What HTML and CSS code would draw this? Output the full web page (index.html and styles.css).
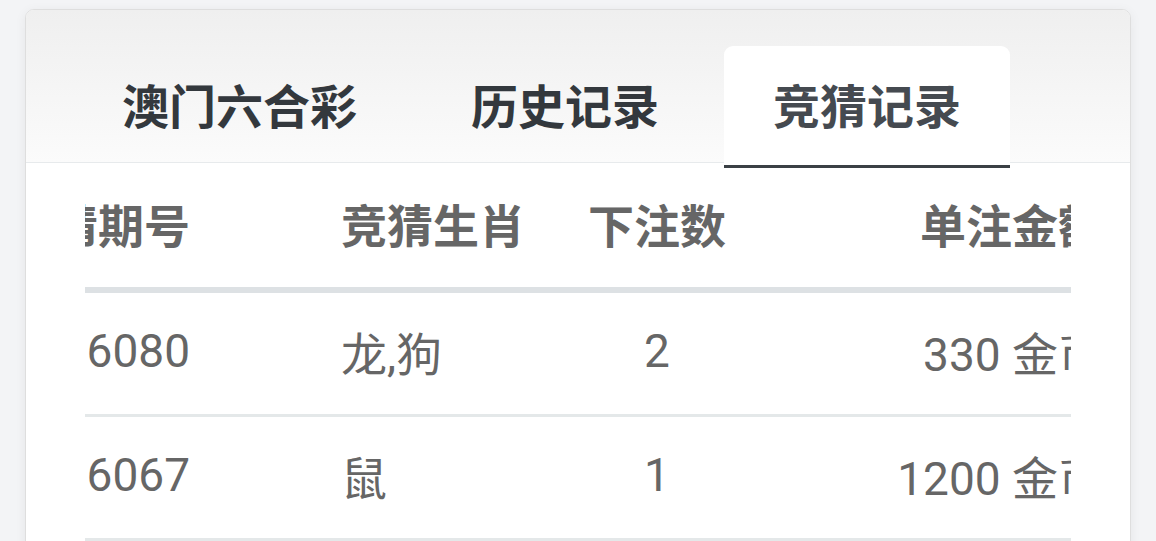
FILE: index.html
```html
<!DOCTYPE html>
<html lang="zh-CN">
<head>
<meta charset="utf-8">
<title>竞猜记录</title>
<link rel="stylesheet" href="styles.css">
</head>
<body>
<div class="card">
  <div class="card-head">
    <div class="tabs">
      <div class="tab">澳门六合彩</div>
      <div class="tab">历史记录</div>
      <div class="tab active">竞猜记录</div>
    </div>
  </div>
  <div class="card-body">
    <div class="scroller">
      <div class="table">
        <div class="tr thead">
          <div class="cell c1">竞猜期号</div>
          <div class="cell c2">竞猜生肖</div>
          <div class="cell c3">下注数</div>
          <div class="cell c4">单注金额</div>
        </div>
        <div class="tr">
          <div class="cell c1">6080</div>
          <div class="cell c2">龙,狗</div>
          <div class="cell c3">2</div>
          <div class="cell c4">330 金币</div>
        </div>
        <div class="tr">
          <div class="cell c1">6067</div>
          <div class="cell c2">鼠</div>
          <div class="cell c3">1</div>
          <div class="cell c4">1200 金币</div>
        </div>
      </div>
    </div>
  </div>
</div>
</body>
</html>
```

FILE: styles.css
```css
html, body {
  margin: 0;
  height: 100%;
  overflow: hidden;
}
body {
  background: #f3f4f6;
  padding: 9px 25px 0;
  font-family: Roboto, "Noto Sans CJK SC", sans-serif;
}
.card {
  background: #ffffff;
  border: 1px solid #dedede;
  border-radius: 9px;
  box-shadow: 0 2px 12px rgba(0, 0, 0, 0.06);
  height: 700px;
  overflow: hidden;
}
.card-head {
  background: linear-gradient(to bottom, #efefef, #fbfbfb);
  border-bottom: 1px solid #e7eaec;
  padding: 36px 0 0 47px;
}
.tabs {
  display: flex;
  gap: 16px;
  margin-bottom: -6px;
}
.tab {
  position: relative;
  z-index: 1;
  box-sizing: border-box;
  height: 122px;
  padding: 0 49px 5px;
  display: flex;
  align-items: center;
  font-family: "Noto Sans CJK SC", sans-serif;
  font-weight: 700;
  font-size: 47px;
  line-height: 1;
  color: #33383d;
  border-bottom: 3px solid transparent;
}
.tab.active {
  background: #ffffff;
  border-radius: 9px 9px 0 0;
  color: #454a50;
  border-bottom-color: #3b4045;
}
.card-body {
  padding: 0 59px;
}
.scroller {
  overflow: hidden;
}
.table {
  margin-left: -85px;
  width: 1141px;
}
.tr {
  display: grid;
  grid-template-columns: 228px 332px 194px 387px;
  height: 121px;
  border-bottom: 3px solid #e4e8e9;
  font-size: 46px;
  color: #666666;
}
.tr.thead {
  height: 124px;
  border-bottom: 6px solid #dde1e4;
  font-family: "Noto Sans CJK SC", sans-serif;
  font-weight: 700;
  font-size: 46px;
}
.cell {
  display: flex;
  align-items: center;
  white-space: nowrap;
  padding-bottom: 5px;
}
.c1 {
  justify-content: flex-end;
  padding-right: 38px;
}
.c2 {
  padding-left: 113px;
}
.c3 {
  justify-content: center;
}
.c4 {
  justify-content: flex-end;
  padding-right: 37px;
}
```
